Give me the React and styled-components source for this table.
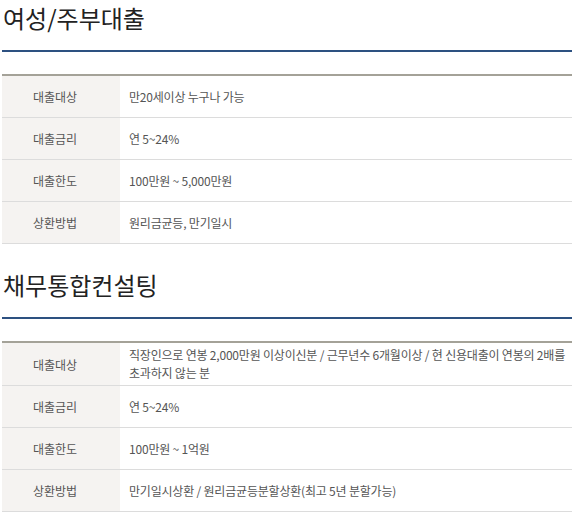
import React from 'react';
import styled, { createGlobalStyle } from 'styled-components';

const GlobalStyle = createGlobalStyle`
  body {
    margin: 0;
    background: #fff;
    font-family: "Noto Sans CJK KR", "Noto Sans", sans-serif;
  }
`;

const Page = styled.div`
  padding-left: 2px;
`;

const Section = styled.section`
  & + & {
    margin-top: 23px;
  }
`;

const Title = styled.h2`
  margin: 0;
  padding: 0 0 14px 1px;
  font-size: 24px;
  font-weight: 400;
  line-height: 36px;
  color: #222;
  border-bottom: 2px solid #2d5181;
`;

const Table = styled.div`
  margin-top: 22px;
  border-top: 2px solid #a4a298;
`;

const Row = styled.div`
  display: grid;
  grid-template-columns: 118px 1fr;
  border-bottom: 1px solid #dcdcdc;
  min-height: 41px;
`;

const Label = styled.div`
  background: #f5f3f1;
  display: flex;
  align-items: center;
  padding-left: 31px;
  font-size: 12px;
  color: #555;
`;

const Value = styled.div`
  display: flex;
  align-items: center;
  padding: 3px 0 3px 9px;
  font-size: 12px;
  line-height: 18px;
  letter-spacing: -0.2px;
  word-break: keep-all;
  color: #555;
`;

const sections = [
  {
    title: '여성/주부대출',
    rows: [
      ['대출대상', '만20세이상 누구나 가능'],
      ['대출금리', '연 5~24%'],
      ['대출한도', '100만원 ~ 5,000만원'],
      ['상환방법', '원리금균등, 만기일시'],
    ],
  },
  {
    title: '채무통합컨설팅',
    rows: [
      ['대출대상', '직장인으로 연봉 2,000만원 이상이신분 / 근무년수 6개월이상 / 현 신용대출이 연봉의 2배를 초과하지 않는 분'],
      ['대출금리', '연 5~24%'],
      ['대출한도', '100만원 ~ 1억원'],
      ['상환방법', '만기일시상환 / 원리금균등분할상환(최고 5년 분할가능)'],
    ],
  },
];

export default function App() {
  return (
    <Page>
      <GlobalStyle />
      {sections.map((s) => (
        <Section key={s.title}>
          <Title>{s.title}</Title>
          <Table>
            {s.rows.map(([label, value]) => (
              <Row key={label}>
                <Label>{label}</Label>
                <Value>{value}</Value>
              </Row>
            ))}
          </Table>
        </Section>
      ))}
    </Page>
  );
}
